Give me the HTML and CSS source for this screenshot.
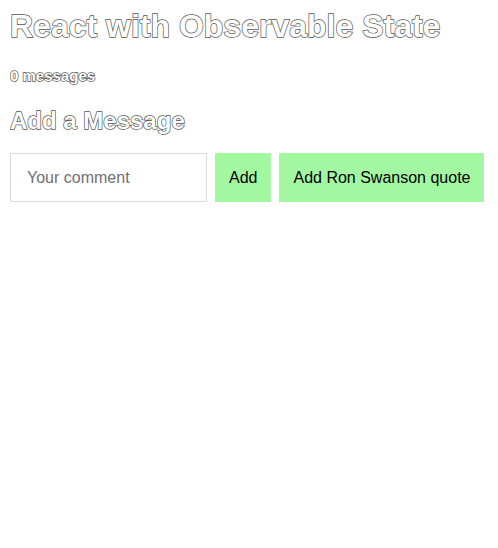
FILE: index.html
```html
<!DOCTYPE html>
<html>
<head>
<meta charset="utf-8">
<link rel="stylesheet" href="styles.css">
</head>
<body>
<div class="app">
  <h1 class="title">React with Observable State</h1>
  <p class="count">0 messages</p>
  <h2 class="subtitle">Add a Message</h2>
  <form class="form">
    <input class="comment" type="text" placeholder="Your comment">
    <button class="btn" type="button">Add</button>
    <button class="btn" type="button">Add Ron Swanson quote</button>
  </form>
</div>
</body>
</html>
```

FILE: styles.css
```css
html, body {
  background: #fff;
}
body {
  margin: 8px 10px;
  font-family: "Liberation Sans", Arial, Helvetica, sans-serif;
}
.title,
.count,
.subtitle {
  color: #fff;
  -webkit-text-stroke: 1.4px #555;
  paint-order: stroke fill;
}
.title {
  font-size: 32px;
  font-weight: bold;
  margin: 0 0 22px;
}
.count {
  font-size: 15px;
  font-weight: bold;
  margin: 0 0 23px;
}
.subtitle {
  font-size: 24px;
  font-weight: bold;
  margin: 0 0 18px;
}
.form {
  display: flex;
  gap: 8px;
  margin: 0;
}
.comment {
  box-sizing: border-box;
  width: 197px;
  height: 49px;
  border: 1px solid #dcdcdc;
  padding: 0 16px;
  font-family: "Liberation Sans", Arial, Helvetica, sans-serif;
  font-size: 16px;
  color: #333;
  outline: none;
  margin: 0;
}
.comment::placeholder {
  color: #707070;
}
.btn {
  height: 49px;
  border: none;
  background: #a3f7a0;
  padding: 0 14px;
  font-family: "Liberation Sans", Arial, Helvetica, sans-serif;
  font-size: 16px;
  color: #000;
  margin: 0;
}
```
